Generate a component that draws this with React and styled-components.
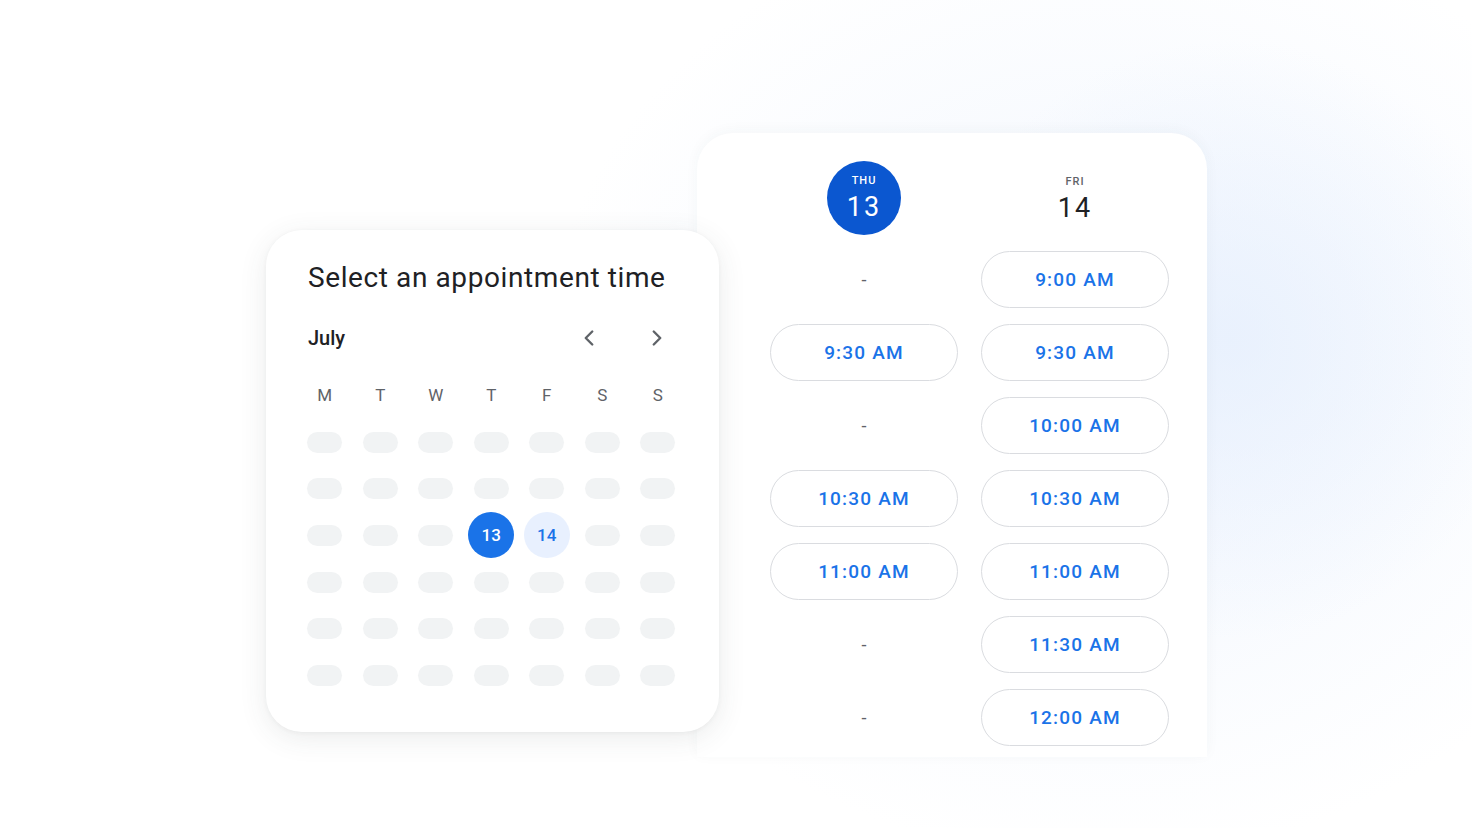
import React from 'react';
import styled, { createGlobalStyle } from 'styled-components';
import { ChevronLeft, ChevronRight } from 'lucide-react';

const GlobalStyle = createGlobalStyle`
  html, body {
    margin: 0;
    padding: 0;
    background: #ffffff;
  }
  body {
    font-family: Roboto, "Open Sans", Arial, sans-serif;
    -webkit-font-smoothing: antialiased;
  }
`;

const WEEKDAYS = ['M', 'T', 'W', 'T', 'F', 'S', 'S'];

const SLOTS = [
  [null, '9:00 AM'],
  ['9:30 AM', '9:30 AM'],
  [null, '10:00 AM'],
  ['10:30 AM', '10:30 AM'],
  ['11:00 AM', '11:00 AM'],
  [null, '11:30 AM'],
  [null, '12:00 AM'],
];

// 6 weeks x 7 days; only the 13th and 14th are shown as real dates
const WEEKS = Array.from({ length: 6 }, (_, w) =>
  Array.from({ length: 7 }, (_, d) => {
    if (w === 2 && d === 3) return 'selected';
    if (w === 2 && d === 4) return 'available';
    return 'blank';
  })
);

export default function App() {
  return (
    <>
      <GlobalStyle />
      <Page>
        <Stage>
          <CalendarCard>
            <Title>Select an appointment time</Title>
            <MonthRow>
              <Month>July</Month>
              <Arrows>
                <ArrowButton aria-label="Previous month">
                  <ChevronLeft size={26} strokeWidth={2.2} />
                </ArrowButton>
                <ArrowButton aria-label="Next month">
                  <ChevronRight size={26} strokeWidth={2.2} />
                </ArrowButton>
              </Arrows>
            </MonthRow>

            <WeekdayRow>
              {WEEKDAYS.map((d, i) => (
                <Weekday key={i}>{d}</Weekday>
              ))}
            </WeekdayRow>

            <WeeksGrid>
              {WEEKS.map((week, w) =>
                week.map((kind, d) => (
                  <DayCell key={`${w}-${d}`}>
                    {kind === 'blank' ? (
                      <Placeholder />
                    ) : (
                      <DateDot $kind={kind}>{kind === 'selected' ? 13 : 14}</DateDot>
                    )}
                  </DayCell>
                ))
              )}
            </WeeksGrid>
          </CalendarCard>

          <SlotsCard>
            <SlotsGrid>
              <DayHead>
                <ActiveDay>
                  <DayName $light>THU</DayName>
                  <DayNumber $light>13</DayNumber>
                </ActiveDay>
              </DayHead>
              <DayHead>
                <PlainDay>
                  <DayName>FRI</DayName>
                  <DayNumber>14</DayNumber>
                </PlainDay>
              </DayHead>

              {SLOTS.map(([thu, fri], i) => (
                <React.Fragment key={i}>
                  {thu ? <SlotButton>{thu}</SlotButton> : <Empty>-</Empty>}
                  {fri ? <SlotButton>{fri}</SlotButton> : <Empty>-</Empty>}
                </React.Fragment>
              ))}
            </SlotsGrid>
          </SlotsCard>
        </Stage>
      </Page>
    </>
  );
}

const Page = styled.div`
  width: 1472px;
  height: 828px;
  overflow: hidden;
  background:
    radial-gradient(
      ellipse 300px 300px at 1230px 340px,
      rgba(228, 238, 253, 0.7) 0%,
      rgba(228, 238, 253, 0) 100%
    ),
    radial-gradient(
      ellipse 560px 480px at 1100px 380px,
      rgba(240, 245, 254, 0.9) 0%,
      rgba(244, 248, 254, 0.6) 55%,
      rgba(255, 255, 255, 0) 100%
    ),
    #ffffff;
`;

const Stage = styled.div`
  display: flex;
  align-items: flex-start;
  padding: 133px 0 0 266px;
`;

const CalendarCard = styled.section`
  position: relative;
  z-index: 2;
  box-sizing: border-box;
  width: 453px;
  height: 502px;
  margin-top: 97px;
  margin-right: -22px;
  padding: 30px 44px 0 42px;
  background: #ffffff;
  border-radius: 36px;
  box-shadow: 0 6px 28px rgba(60, 64, 67, 0.1), 0 1px 4px rgba(60, 64, 67, 0.05);
`;

const Title = styled.h1`
  margin: 0;
  font-size: 28px;
  line-height: 36px;
  font-weight: 400;
  color: #202124;
  letter-spacing: 0.6px;
`;

const MonthRow = styled.div`
  display: flex;
  align-items: center;
  justify-content: space-between;
  height: 36px;
  margin-top: 24px;
`;

const Month = styled.span`
  font-size: 20px;
  font-weight: 500;
  color: #202124;
`;

const Arrows = styled.div`
  display: flex;
  gap: 32px;
`;

const ArrowButton = styled.button`
  display: flex;
  align-items: center;
  justify-content: center;
  width: 36px;
  height: 36px;
  padding: 0;
  border: none;
  background: transparent;
  color: #5f6368;
  cursor: pointer;
`;

const WeekdayRow = styled.div`
  display: grid;
  grid-template-columns: repeat(7, 55.5px);
  margin: 27px -11px 0 -11px;
  height: 24px;
`;

const Weekday = styled.span`
  text-align: center;
  font-size: 17px;
  line-height: 24px;
  color: #5f6368;
`;

const WeeksGrid = styled.div`
  display: grid;
  grid-template-columns: repeat(7, 55.5px);
  grid-auto-rows: 46.6px;
  margin: 12px -11px 0 -11px;
`;

const DayCell = styled.div`
  display: flex;
  align-items: center;
  justify-content: center;
`;

const Placeholder = styled.span`
  width: 35px;
  height: 21px;
  border-radius: 11px;
  background: #f1f3f4;
`;

const DateDot = styled.span`
  display: flex;
  align-items: center;
  justify-content: center;
  width: 46px;
  height: 46px;
  border-radius: 50%;
  font-size: 17px;
  font-weight: 500;
  background: ${(p) => (p.$kind === 'selected' ? '#1a73e8' : '#e8f0fe')};
  color: ${(p) => (p.$kind === 'selected' ? '#ffffff' : '#1a73e8')};
`;

const SlotsCard = styled.section`
  position: relative;
  z-index: 1;
  box-sizing: border-box;
  width: 510px;
  padding: 28px 38px 11px 73px;
  background: #ffffff;
  border-radius: 36px 36px 0 0;
  box-shadow: 0 -2px 14px rgba(60, 64, 67, 0.04);
`;

const SlotsGrid = styled.div`
  display: grid;
  grid-template-columns: 188px 188px;
  grid-template-rows: 74px;
  grid-auto-rows: 57px;
  column-gap: 23px;
  row-gap: 16px;

  & > :nth-child(-n + 2) {
    margin-bottom: -1px;
  }
`;

const DayHead = styled.div`
  display: flex;
  justify-content: center;
  align-items: flex-start;
`;

const ActiveDay = styled.div`
  display: flex;
  flex-direction: column;
  align-items: center;
  justify-content: center;
  width: 74px;
  height: 74px;
  border-radius: 50%;
  background: #0b57d0;
`;

const PlainDay = styled.div`
  display: flex;
  flex-direction: column;
  align-items: center;
  justify-content: center;
  height: 74px;
  margin-top: 1px;
`;

const DayName = styled.span`
  font-size: 11px;
  line-height: 14px;
  font-weight: 500;
  letter-spacing: 1px;
  color: ${(p) => (p.$light ? '#ffffff' : '#5f6368')};
`;

const DayNumber = styled.span`
  margin-top: 3px;
  font-size: 27px;
  line-height: 32px;
  font-weight: 400;
  letter-spacing: 2px;
  color: ${(p) => (p.$light ? '#ffffff' : '#202124')};
`;

const SlotButton = styled.button`
  box-sizing: border-box;
  height: 57px;
  border: 1.5px solid #dadce0;
  border-radius: 29px;
  background: #ffffff;
  color: #1a73e8;
  font-family: Roboto, "Open Sans", Arial, sans-serif;
  font-size: 19px;
  font-weight: 500;
  letter-spacing: 1.2px;
  cursor: pointer;
`;

const Empty = styled.span`
  display: flex;
  align-items: center;
  justify-content: center;
  font-size: 18px;
  color: #5f6368;
`;
